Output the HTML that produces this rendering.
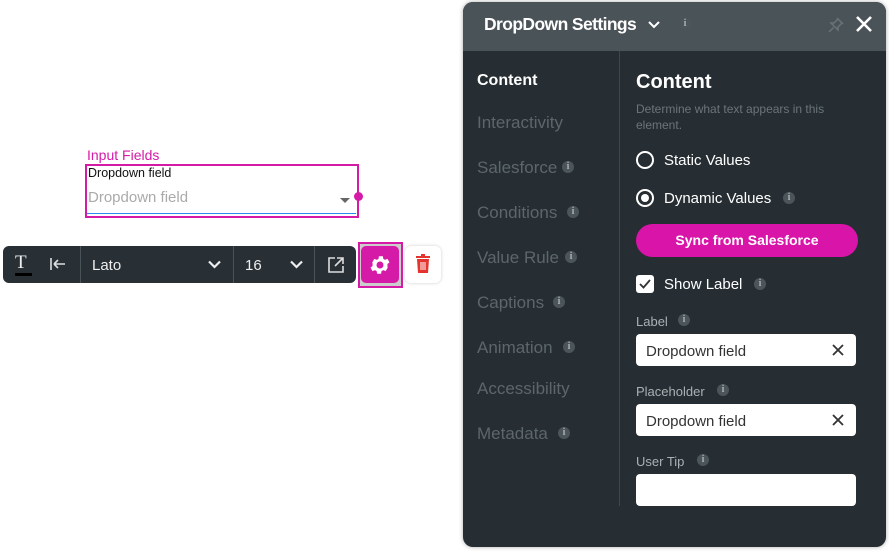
<!DOCTYPE html>
<html><head><style>
*{box-sizing:border-box;margin:0;padding:0}
body{width:889px;height:552px;background:#fff;font-family:"Liberation Sans",sans-serif;position:relative;overflow:hidden}
.a{position:absolute;white-space:nowrap}
.i{position:absolute;width:12px;height:12px;border-radius:50%;background:#4c555a;color:#a8b0b4;font-size:10px;font-weight:bold;text-align:center;line-height:12px;font-family:"Liberation Serif",serif}
.nav{position:absolute;left:477px;color:#5c666b;font-size:17px}
.lbl{position:absolute;left:636px;color:#aab1b5;font-size:13px}
.inp{position:absolute;left:636px;width:220px;height:32px;background:#fff;border-radius:4px;color:#333;font-size:15px;padding:9px 10px}
.x{position:absolute;right:9px;top:7px}
</style></head><body>
<div class="a" style="left:87px;top:147px;color:#d61aa8;font-size:14px">Input Fields</div>
<div class="a" style="left:85px;top:164px;width:274px;height:54px;border:2px solid #d61aa8"></div>
<div class="a" style="left:88px;top:166px;font-size:12.5px;color:#111">Dropdown field</div>
<div class="a" style="left:88px;top:189px;font-size:15px;color:#aaa">Dropdown field</div>
<div class="a" style="left:340px;top:198px;width:0;height:0;border-left:5px solid transparent;border-right:5px solid transparent;border-top:5px solid #666"></div>
<div class="a" style="left:87px;top:213px;width:269px;height:1px;background:#2d8cf0"></div>
<div class="a" style="left:354px;top:192px;width:9px;height:9px;border-radius:50%;background:#d61aa8"></div>

<div class="a" style="left:3px;top:246px;width:353px;height:37px;background:#283036;border-radius:6px"></div>
<div class="a" style="left:15px;top:252px;color:#eee;font-size:19px;font-family:'Liberation Serif',serif">T</div>
<div class="a" style="left:15px;top:273px;width:17px;height:3px;background:#000"></div>
<svg class="a" style="left:50px;top:257px" width="16" height="14" viewBox="0 0 16 14" fill="none" stroke="#ddd" stroke-width="1.6"><path d="M1 1v12M4 7h11M4 7l4-4M4 7l4 4"/></svg>
<div class="a" style="left:80px;top:246px;width:1px;height:37px;background:#4a5358"></div>
<div class="a" style="left:92px;top:257px;color:#eee;font-size:15px">Lato</div>
<svg class="a" style="left:208px;top:260px" width="13" height="9" viewBox="0 0 13 9" fill="none" stroke="#eee" stroke-width="2.2"><path d="M1 1.5l5.5 5.5 5.5-5.5"/></svg>
<div class="a" style="left:233px;top:246px;width:1px;height:37px;background:#4a5358"></div>
<div class="a" style="left:245px;top:257px;color:#eee;font-size:15px">16</div>
<svg class="a" style="left:290px;top:260px" width="13" height="9" viewBox="0 0 13 9" fill="none" stroke="#eee" stroke-width="2.2"><path d="M1 1.5l5.5 5.5 5.5-5.5"/></svg>
<div class="a" style="left:314px;top:246px;width:1px;height:37px;background:#4a5358"></div>
<svg class="a" style="left:327px;top:256px" width="18" height="18" viewBox="0 0 18 18" fill="none" stroke="#ddd" stroke-width="1.6"><path d="M8 2H2v14h14v-6M10 2h6v6M16 2 8 10"/></svg>
<div class="a" style="left:358px;top:242px;width:45px;height:46px;border:2px solid #d61aa8;background:#ccc"></div>
<div class="a" style="left:361px;top:246px;width:38px;height:37px;background:#d61aa8;border-radius:5px"></div>
<svg class="a" style="left:368px;top:253px" width="24" height="24" viewBox="0 0 24 24"><path fill="#fff" d="M19.4 13a7.5 7.5 0 0 0 0-2l2.1-1.6-2-3.5-2.5 1a7 7 0 0 0-1.7-1l-.4-2.7h-4l-.4 2.7a7 7 0 0 0-1.7 1l-2.5-1-2 3.5L4.6 11a7.5 7.5 0 0 0 0 2l-2.1 1.6 2 3.5 2.5-1a7 7 0 0 0 1.7 1l.4 2.7h4l.4-2.7a7 7 0 0 0 1.7-1l2.5 1 2-3.5zM12 15.5a3.5 3.5 0 1 1 0-7 3.5 3.5 0 0 1 0 7z"/></svg>
<div class="a" style="left:405px;top:246px;width:36px;height:37px;background:#fff;border-radius:6px;box-shadow:0 0 3px #ccc"></div>
<svg class="a" style="left:415px;top:254px" width="16" height="20" viewBox="0 0 16 20"><rect x="1" y="2" width="14" height="2" fill="#e3342f"/><rect x="6" y="0" width="4" height="2" fill="#e3342f"/><path d="M2 5h12l-1 14H3z" fill="#e3342f"/><path d="M6 8v8M8 8v8M10 8v8" stroke="#fff" stroke-width="1"/></svg>

<div class="a" style="left:463px;top:2px;width:423px;height:545px;background:#262e33;border-radius:10px;overflow:hidden;box-shadow:0 0 4px #aaa">
<div style="height:49px;background:#4a5358"></div>
</div>
<div class="a" style="left:484px;top:14px;color:#fff;font-size:17.5px;font-weight:bold;letter-spacing:-0.6px">DropDown Settings</div>
<svg class="a" style="left:648px;top:21px" width="12" height="8" viewBox="0 0 12 8" fill="none" stroke="#fff" stroke-width="2"><path d="M1 1l5 5 5-5"/></svg>
<div class="i" style="left:679px;top:18px">i</div>
<svg class="a" style="left:828px;top:17px" width="16" height="16" viewBox="0 0 16 16" fill="none" stroke="#6a7378" stroke-width="1.5"><path d="M9 1l6 6M10 2l-4 4-3 0 7 7 0-3 4-4M5.5 10.5 1 15"/></svg>
<svg class="a" style="left:855px;top:15px" width="18" height="18" viewBox="0 0 18 18" stroke="#fff" stroke-width="2.6"><path d="M2 2l14 14M16 2 2 16"/></svg>
<div class="a" style="left:619px;top:51px;width:1px;height:455px;background:#3e474c"></div>
<div class="nav" style="top:72px;color:#fff;font-weight:bold;font-size:16px">Content</div>
<div class="nav" style="top:113px">Interactivity</div>
<div class="nav" style="top:158px">Salesforce</div><div class="i" style="left:562px;top:161px">i</div>
<div class="nav" style="top:203px">Conditions</div><div class="i" style="left:567px;top:206px">i</div>
<div class="nav" style="top:248px">Value Rule</div><div class="i" style="left:565px;top:251px">i</div>
<div class="nav" style="top:293px">Captions</div><div class="i" style="left:553px;top:296px">i</div>
<div class="nav" style="top:338px">Animation</div><div class="i" style="left:563px;top:341px">i</div>
<div class="nav" style="top:379px">Accessibility</div>
<div class="nav" style="top:424px">Metadata</div><div class="i" style="left:558px;top:427px">i</div>

<div class="a" style="left:636px;top:71px;color:#fff;font-size:20px;font-weight:bold">Content</div>
<div class="a" style="left:636px;top:101px;color:#6b757a;font-size:12px;line-height:16px;white-space:normal;width:220px">Determine what text appears in this element.</div>
<div class="a" style="left:636px;top:151px;width:18px;height:18px;border:2px solid #fff;border-radius:50%"></div>
<div class="a" style="left:664px;top:152px;color:#fff;font-size:15px">Static Values</div>
<div class="a" style="left:636px;top:189px;width:18px;height:18px;border:2px solid #fff;border-radius:50%"></div>
<div class="a" style="left:641px;top:194px;width:8px;height:8px;background:#fff;border-radius:50%"></div>
<div class="a" style="left:664px;top:190px;color:#fff;font-size:15px">Dynamic Values</div><div class="i" style="left:783px;top:192px">i</div>
<div class="a" style="left:636px;top:224px;width:222px;height:33px;background:#d914a8;border-radius:17px;color:#fff;font-size:14px;font-weight:bold;text-align:center;line-height:33px">Sync from Salesforce</div>
<div class="a" style="left:636px;top:275px;width:18px;height:18px;background:#fff;border-radius:3px"></div>
<svg class="a" style="left:639px;top:279px" width="12" height="10" viewBox="0 0 12 10" fill="none" stroke="#333" stroke-width="1.8"><path d="M1 5l3.5 3.5L11 1"/></svg>
<div class="a" style="left:664px;top:276px;color:#fff;font-size:15px">Show Label</div><div class="i" style="left:754px;top:278px">i</div>
<div class="lbl" style="top:314px">Label</div><div class="i" style="left:678px;top:314px">i</div>
<div class="inp" style="top:334px">Dropdown field<svg class="x" width="18" height="18" viewBox="0 0 18 18" stroke="#333" stroke-width="1.8"><path d="M4 4l10 10M14 4 4 14"/></svg></div>
<div class="lbl" style="top:384px">Placeholder</div><div class="i" style="left:717px;top:384px">i</div>
<div class="inp" style="top:404px">Dropdown field<svg class="x" width="18" height="18" viewBox="0 0 18 18" stroke="#333" stroke-width="1.8"><path d="M4 4l10 10M14 4 4 14"/></svg></div>
<div class="lbl" style="top:454px">User Tip</div><div class="i" style="left:697px;top:454px">i</div>
<div class="inp" style="top:474px"></div>
</body></html>
